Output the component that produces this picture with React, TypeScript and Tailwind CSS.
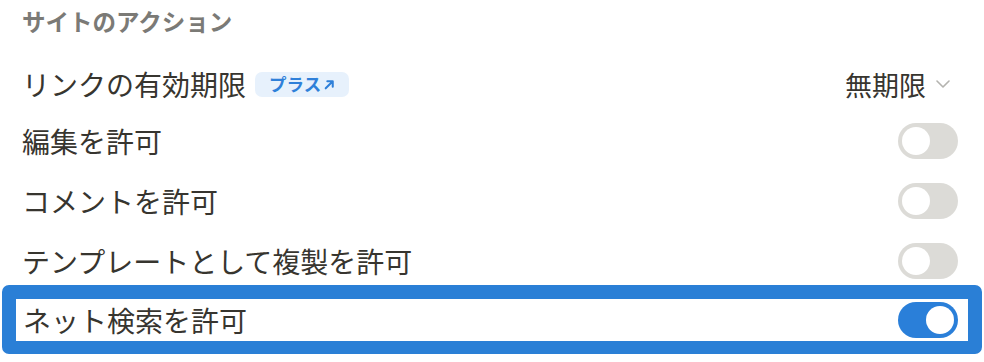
import React from "react";

function Toggle({ on }: { on?: boolean }) {
  return (
    <div
      className={
        "flex h-[36px] w-[60px] shrink-0 items-center rounded-full px-[4px] " +
        (on ? "justify-end bg-[#2a7fd9]" : "justify-start bg-[#dcdbd7]")
      }
    >
      <div className="h-[28px] w-[28px] rounded-full bg-white" />
    </div>
  );
}

export default function App() {
  return (
    <div
      className="w-[984px] h-[362px] bg-white text-[#37352f] overflow-hidden"
      style={{ fontFamily: '"Noto Sans CJK JP", "Noto Sans", sans-serif' }}
    >
      <div className="flex h-[44px] items-center pl-[22px] text-[23.5px] font-bold text-[#7b7a76]">
        サイトのアクション
      </div>
      <div className="mt-[13px] flex h-[54px] items-center justify-between pl-[22px] pr-[34px]">
        <div className="flex items-center">
          <span className="text-[28px] leading-none">リンクの有効期限</span>
          <span className="ml-[9px] flex h-[25px] items-center rounded-[7px] bg-[#e7f1fc] pl-[14px] pr-[13px] text-[17.5px] font-semibold text-[#2f80d9]">
            プラス
            <svg width="13" height="13" viewBox="0 0 12 12" className="ml-[2px]">
              <path d="M2.5 9.5 L9 3 M4 3 H9 V8" fill="none" stroke="#2f80d9" strokeWidth="1.9" strokeLinecap="round" strokeLinejoin="round" />
            </svg>
          </span>
        </div>
        <div className="flex items-center">
          <span className="text-[27px] leading-none">無期限</span>
          <svg width="14" height="8" viewBox="0 0 14 8" className="ml-[10px]">
            <path d="M1 1 L7 7 L13 1" fill="none" stroke="#b4b3af" strokeWidth="1.6" strokeLinecap="round" strokeLinejoin="round" />
          </svg>
        </div>
      </div>
      <div className="flex h-[60px] items-center justify-between pl-[22px] pr-[26px]">
        <span className="text-[28px] leading-none">編集を許可</span>
        <Toggle />
      </div>
      <div className="flex h-[60px] items-center justify-between pl-[22px] pr-[26px]">
        <span className="text-[28px] leading-none">コメントを許可</span>
        <Toggle />
      </div>
      <div className="flex h-[54px] items-start justify-between pl-[22px] pr-[26px] pt-[12px]">
        <span className="mt-[4px] text-[28px] leading-none">テンプレートとして複製を許可</span>
        <Toggle />
      </div>
      <div className="mx-[2px] h-[69px] rounded-[7px] border-[14px] border-b-[13px] border-[#2a7fd6]">
        <div className="flex h-full items-center justify-between pl-[7px] pr-[10px]">
          <span className="text-[28px] leading-none">ネット検索を許可</span>
          <Toggle on />
        </div>
      </div>
    </div>
  );
}
